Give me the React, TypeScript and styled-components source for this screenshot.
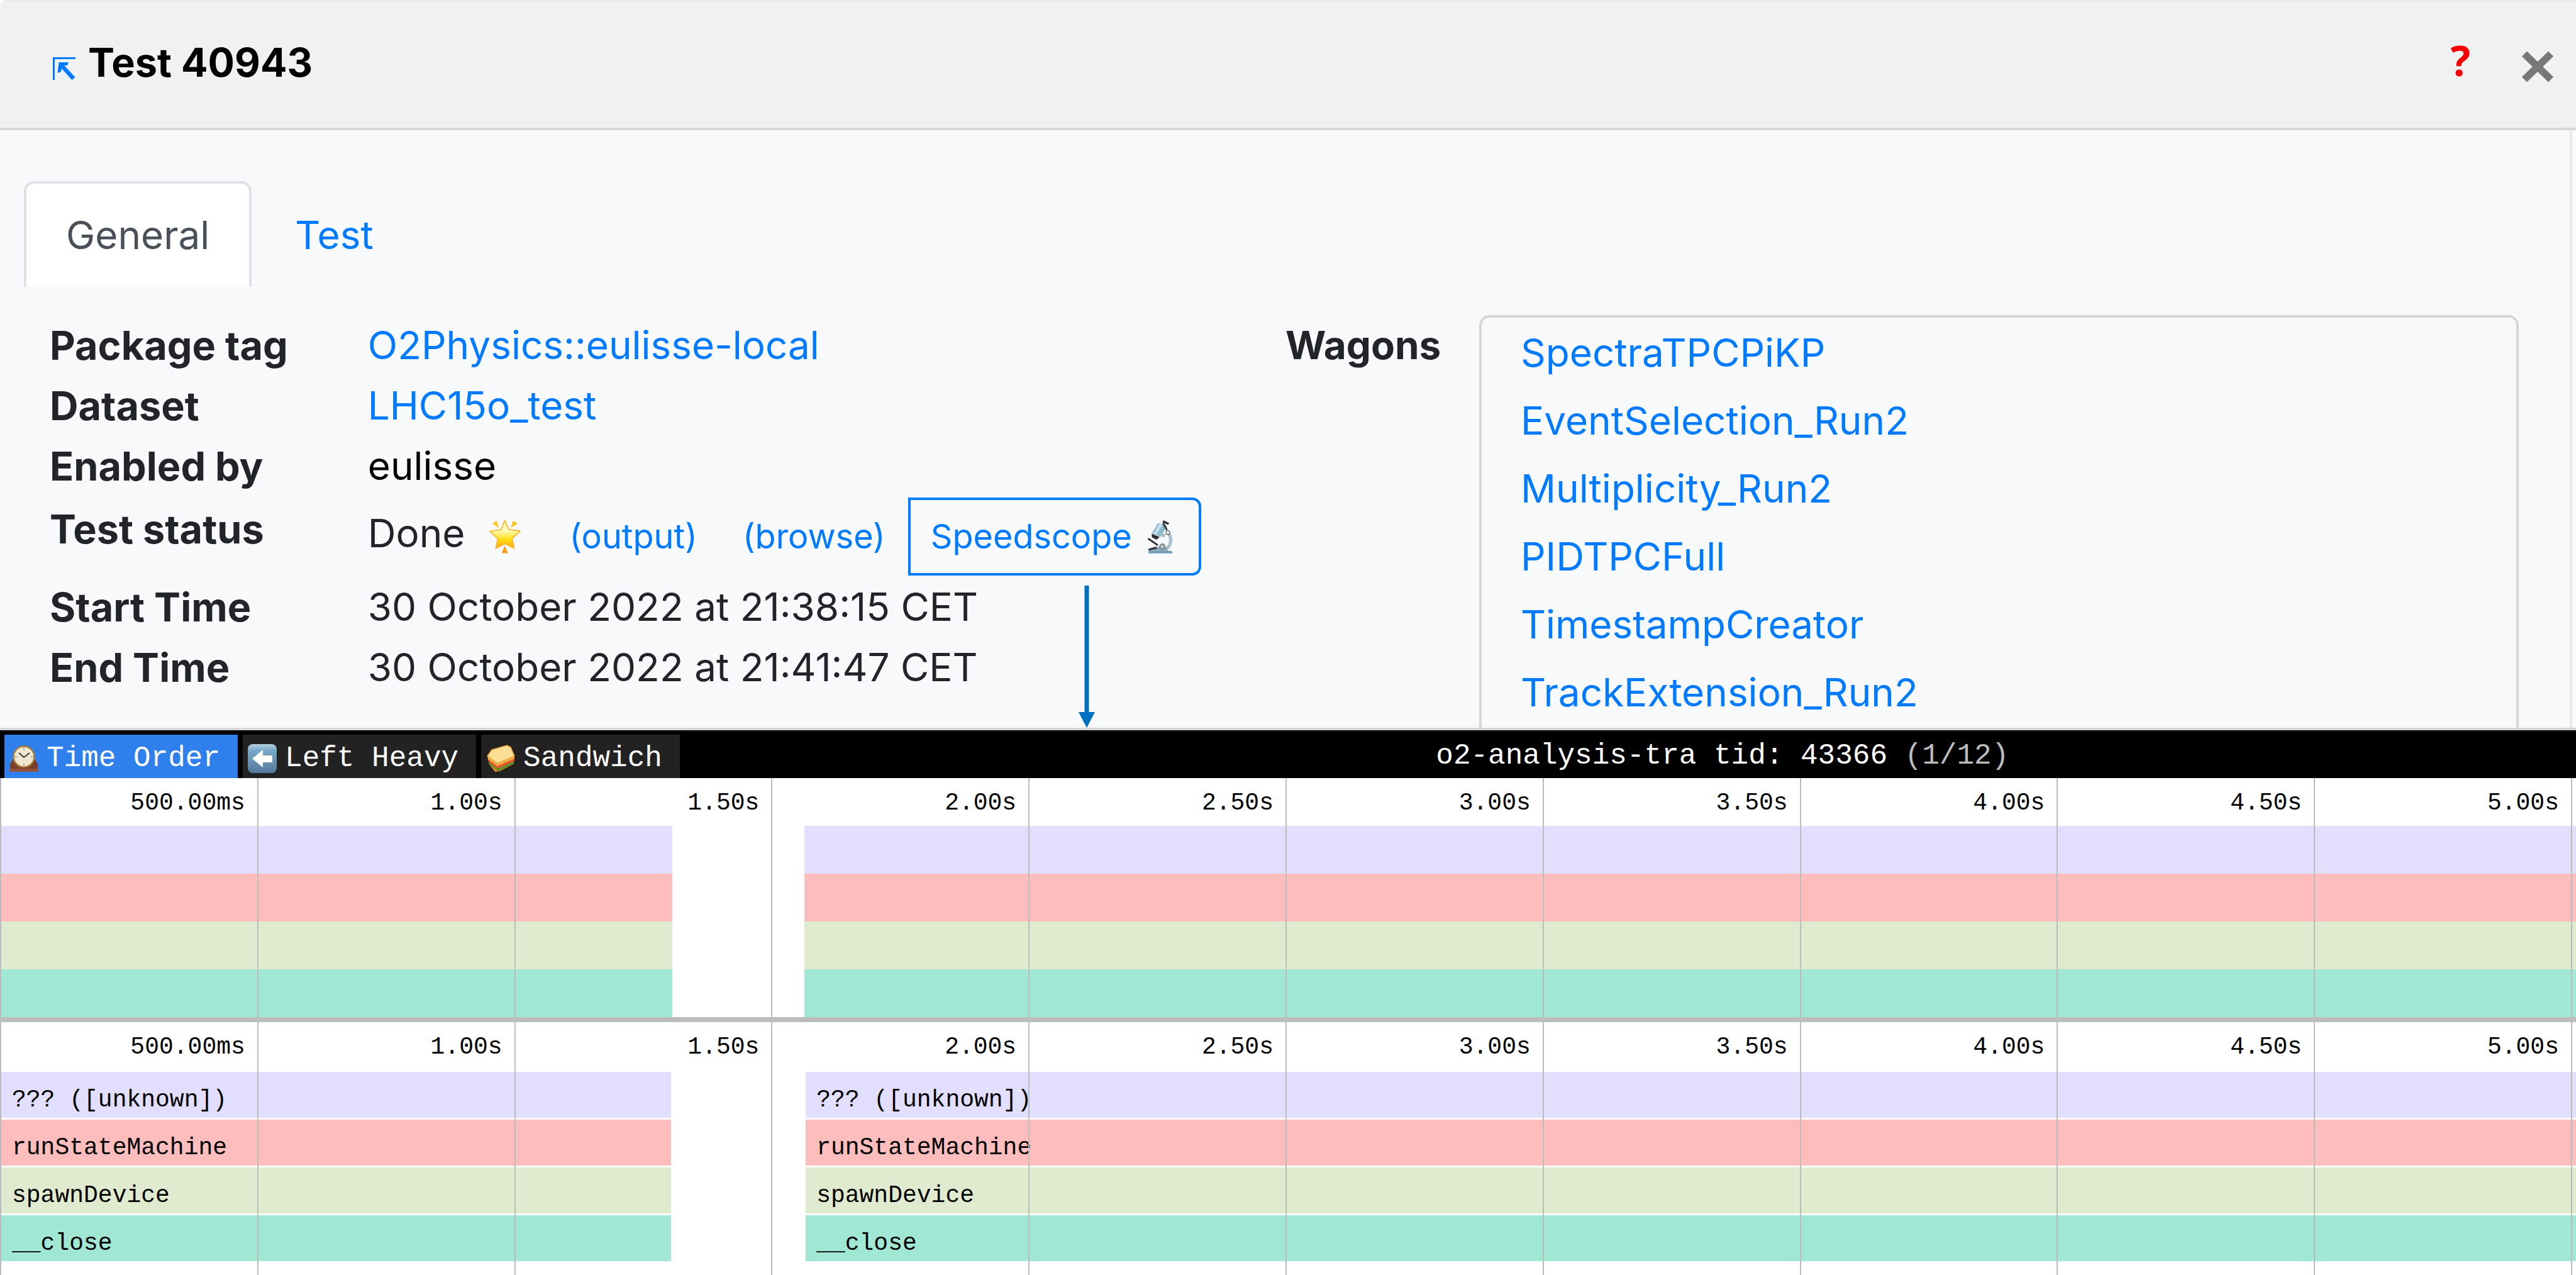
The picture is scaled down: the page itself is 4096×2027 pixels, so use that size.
import React from "react";
import styled, { createGlobalStyle } from "styled-components";

const sans = `Inter, "Liberation Sans", sans-serif`;
const mono = `"Liberation Mono", "DejaVu Sans Mono", monospace`;

const colors = {
  link: "#007bff",
  text: "#212529",
  border: "#d5d7d9",
  grid: "#bcbcbc",
};

const GlobalStyle = createGlobalStyle`
  *, *::before, *::after { box-sizing: border-box; }
  body { margin: 0; background: #fff; font-family: ${sans}; color: ${colors.text}; }
`;

const Page = styled.div`
  display: flex;
  flex-direction: column;
  min-height: 100vh;
  overflow: hidden;
`;

/* ---------- dialog header ---------- */

const Header = styled.header`
  display: flex;
  justify-content: space-between;
  align-items: flex-start;
  padding: 48px 36px 42px 84px;
  background: #f0f1f3;
  border-top: 3px solid #e9eaec;
  border-bottom: 4px solid ${colors.border};
  border-top-left-radius: 12px;
`;

const TitleGroup = styled.div`
  display: flex;
  align-items: center;
  gap: 20px;
`;

const Title = styled.h1`
  margin: 0;
  font-size: 63px;
  line-height: 96px;
  font-weight: 700;
  color: #000;
`;

const IconLink = styled.a`
  display: flex;
  color: ${colors.link};
`;

const HeaderActions = styled.div`
  display: flex;
  align-items: flex-start;
  gap: 82px;
`;

const HelpLink = styled.a`
  font-family: "Noto Sans", "Open Sans", sans-serif;
  font-size: 66px;
  line-height: 88px;
  font-weight: 700;
  color: #f80000;
  text-decoration: none;
`;

const CloseButton = styled.button`
  display: flex;
  align-items: center;
  height: 110px;
  padding: 0;
  border: 0;
  background: none;
  color: #777978;
`;

/* ---------- dialog body ---------- */

const Body = styled.main`
  background: #fbfbfc;
  border-bottom: 4px solid ${colors.border};
`;

const Panel = styled.div`
  margin-right: 6px;
  padding: 81px 81px 0 38px;
  background: #f8f9fb;
  border-right: 4px solid #e7e8ea;
`;

const Tabs = styled.nav`
  display: flex;
  gap: 2px;
`;

const Tab = styled.button<{ $active?: boolean }>`
  padding: 34px 63px;
  border: 4px solid ${p => (p.$active ? "#dee2e6" : "transparent")};
  border-bottom: 0;
  border-radius: 16px 16px 0 0;
  background: ${p => (p.$active ? "#fff" : "transparent")};
  color: ${p => (p.$active ? "#495057" : colors.link)};
  font-family: inherit;
  font-size: 62px;
  line-height: 96px;
`;

const Details = styled.div`
  display: grid;
  grid-template-columns: 1965fr 308fr 1653fr;
  padding: 45px 0 0 41px;
`;

const Facts = styled.dl`
  display: grid;
  grid-template-columns: 506fr 1460fr;
  align-content: start;
  margin: 0;
`;

const Label = styled.dt<{ $tall?: boolean }>`
  font-size: 63px;
  line-height: ${p => (p.$tall ? 104 : 96)}px;
  font-weight: 700;
  white-space: nowrap;
`;

const Value = styled.dd<{ $dark?: boolean }>`
  margin: 0;
  font-size: 62px;
  line-height: 96px;
  white-space: nowrap;
  color: ${p => (p.$dark ? "#000" : "inherit")};
`;

const TextLink = styled.a`
  color: ${colors.link};
  text-decoration: none;
`;

const StarSlot = styled.span`
  display: inline-flex;
  vertical-align: middle;
  margin: 0 38px 0 36px;
`;

const ButtonGroup = styled.span`
  display: inline-flex;
  vertical-align: middle;
  margin: 2px 0;
`;

const SmallButton = styled.a<{ $outlined?: boolean }>`
  position: relative;
  display: flex;
  align-items: center;
  gap: 16px;
  padding: 16px 32px;
  border: 4px solid ${p => (p.$outlined ? colors.link : "transparent")};
  border-radius: 0 14px 14px 0;
  color: ${colors.link};
  font-size: 54px;
  line-height: 84px;
  text-decoration: none;
`;

const Pointer = styled.svg`
  position: absolute;
  top: 136px;
  left: 266px;
  width: 28px;
  height: 226px;
`;

const WagonsHeading = styled.h2`
  margin: 0;
  font-size: 62px;
  line-height: 96px;
  font-weight: 700;
`;

const WagonList = styled.ul`
  display: flex;
  flex-direction: column;
  gap: 12px;
  margin: 0;
  padding: 8px 62px;
  list-style: none;
  font-size: 62px;
  line-height: 96px;
  border: 4px solid ${colors.border};
  border-bottom: 0;
  border-radius: 16px 16px 0 0;
`;

/* ---------- profiler ---------- */

const Toolbar = styled.div`
  display: flex;
  align-items: flex-end;
  padding-left: 7px;
  background: #000;
  color: #fff;
  font-family: ${mono};
  font-size: 46px;
  white-space: nowrap;
`;

const ViewTabs = styled.div`
  display: flex;
  gap: 8px;
`;

const ViewTab = styled.button<{ $active?: boolean }>`
  display: flex;
  align-items: center;
  gap: 13px;
  padding: 7px 28px 0 8px;
  border: 0;
  background: ${p => (p.$active ? "#2f80ed" : "#222")};
  color: #fff;
  font: inherit;
  line-height: 62px;
`;

const Spacer = styled.div<{ $grow: number }>`
  flex: ${p => p.$grow} 0 0;
`;

const ProfileTitle = styled.div`
  padding-top: 6px;
  line-height: 70px;
`;

const Dim = styled.span`
  color: #bdbdbd;
`;

const Chart = styled.section<{ $fill?: boolean; $divider?: boolean }>`
  display: grid;
  grid-template-columns: minmax(0, 1fr);
  flex: ${p => (p.$fill ? "1 0 auto" : "none")};
  border-bottom: ${p => (p.$divider ? `8px solid ${colors.grid}` : "0")};
  font-family: ${mono};
  font-size: 38px;
  color: #000;
`;

const TimeGrid = styled.div`
  grid-area: 1 / 1;
  z-index: 1;
  display: grid;
  grid-template-columns: repeat(10, 1fr) 8px;
`;

const TimeCell = styled.div`
  padding: 3px 19px 0 0;
  border-left: 2px solid ${colors.grid};
  text-align: right;
  line-height: 73px;
`;

const TimeEdge = styled.div`
  border-left: 2px solid ${colors.grid};
`;

const Frames = styled.div<{ $flush?: boolean }>`
  grid-area: 1 / 1;
  display: flex;
  flex-direction: column;
  padding-top: 76px;
  padding-bottom: ${p => (p.$flush ? 0 : 22)}px;
`;

const FrameRow = styled.div`
  display: grid;
  grid-template-columns: 26.1% 5.13% minmax(0, 1fr);
  height: 76px;
`;

const Frame = styled.div<{ $color: string; $second?: boolean; $labelled?: boolean }>`
  grid-column: ${p => (p.$second ? 3 : 1)};
  margin: ${p => (p.$labelled ? (p.$second ? "3px 0 0 2px" : "3px 2px 0 2px") : "0")};
  padding: 17px 0 0 17px;
  background: ${p => p.$color};
  line-height: 56px;
  white-space: nowrap;
  overflow: hidden;
`;

/* ---------- icons ---------- */

const CornerArrowIcon = () => (
  <svg width="36" height="56" viewBox="0 0 36 56" fill="none" stroke="currentColor">
    <path d="M1.5 56V21.500H36" strokeWidth="3" />
    <path d="M12 31L33 54" strokeWidth="6.500" />
    <path d="M7.500 45L9.500 28H25L23 33L15 33L13 43Z" fill="currentColor" stroke="none" />
  </svg>
);

const CloseIcon = () => (
  <svg width="50" height="50" viewBox="0 0 50 50" stroke="currentColor" strokeWidth="11.500">
    <path d="M4 4.500L46 45.500M46 4.500L4 45.500" />
  </svg>
);

const StarIcon = () => (
  <svg width="56" height="56" viewBox="36 44 180 180">
    <defs>
      <linearGradient id="star" x1="0" y1="0" x2="0" y2="1">
        <stop offset="0" stopColor="#fff3a0" />
        <stop offset="0.350" stopColor="#fffbc4" />
        <stop offset="0.680" stopColor="#fee011" />
        <stop offset="1" stopColor="#fba51a" />
      </linearGradient>
    </defs>
    <path
      d="M125 52L145 98L203 106L162 145L173 194L125 171L79 194L89 145L49 107L106 98Z"
      fill="url(#star)" stroke="#fbb92b" strokeWidth="6" strokeLinejoin="round"
    />
    <path d="M64 68L82 56L92 86Z M188 68L168 56L159 86Z" fill="#fbc821" stroke="#fbc821" strokeWidth="4" strokeLinejoin="round" />
    <path d="M125 186L138 217H112Z" fill="#f99b16" stroke="#f99b16" strokeWidth="4" strokeLinejoin="round" />
  </svg>
);

const MicroscopeIcon = () => (
  <svg width="58" height="58" viewBox="33 42 187 187">
    <path d="M160 112C188 134 188 178 152 204" fill="none" stroke="#a9c3cf" strokeWidth="17" />
    <path d="M64 222L68 209H184L190 222Z" fill="#6f9db2" />
    <path d="M82 209L124 184L158 190L166 209Z" fill="#86a9b9" />
    <path d="M64 146L114 180" stroke="#2b2d31" strokeWidth="9" />
    <path d="M66 204L108 192" stroke="#34373b" strokeWidth="12" />
    <path d="M114 66L162 82L128 138L84 118Z" fill="#8fbccd" />
    <path d="M122 70L138 75L106 126L92 120Z" fill="#c3dfe9" />
    <path d="M82 120L122 138L108 152L84 140Z" fill="#2a2b2f" />
    <path d="M140 66L152 86L160 102" stroke="#2a2b2f" strokeWidth="9" fill="none" />
    <path d="M142 52L172 66L166 76L138 62Z" fill="#2f3237" />
    <circle cx="165" cy="115" r="10" fill="#f2f5f7" stroke="#5c6166" strokeWidth="4" />
    <circle cx="143" cy="130" r="6" fill="#d9dfe2" stroke="#5c6166" strokeWidth="3" />
    <circle cx="137" cy="187" r="14" fill="#9ba6ac" stroke="#6b7880" strokeWidth="4" />
    <circle cx="137" cy="187" r="5" fill="#d5dadd" />
  </svg>
);

const ClockIcon = () => (
  <svg width="46" height="44" viewBox="0 0 46 44">
    <path d="M8 20C8 8 14 1 23 1S38 8 38 20L45 30V39H1V30Z" fill="#7a3f2a" />
    <rect x="0" y="38" width="46" height="5" fill="#93523b" />
    <circle cx="23" cy="19" r="16.500" fill="#efe7d0" stroke="#a87b3c" strokeWidth="2.500" />
    <path d="M15 13L23 20L32 13" fill="none" stroke="#3a3a3a" strokeWidth="2" />
    <path d="M23 5V8M23 30V33M9 19H12M34 19H37" stroke="#8f8a7c" strokeWidth="1.500" />
  </svg>
);

const LeftArrowIcon = () => (
  <svg width="46" height="46" viewBox="0 0 46 46">
    <defs>
      <linearGradient id="key" x1="0" y1="0" x2="0" y2="1">
        <stop offset="0" stopColor="#b4d3e4" />
        <stop offset="0.220" stopColor="#78a9c8" />
        <stop offset="1" stopColor="#55799a" />
      </linearGradient>
    </defs>
    <rect width="46" height="46" rx="8" fill="url(#key)" />
    <path d="M7 23L24 9V18H39V29H24V37Z" fill="#fff" />
  </svg>
);

const SandwichIcon = () => (
  <svg width="46" height="44" viewBox="0 0 46 44">
    <path d="M2 18L17 32L18 43L14 43L5 31Z" fill="#d98a2a" />
    <path d="M17 31L44 21L43 31L20 43Z" fill="#c8791f" />
    <path d="M4 26L17 37L44 25V30L19 42L5 31Z" fill="#5f8f2a" />
    <path d="M3 22L17 33L45 22V26L18 38L4 27Z" fill="#e5532d" />
    <path d="M2 18L17 30L45 18V22L18 34L3 23Z" fill="#f4b13d" />
    <path d="M9 8L33 1L39 4L45 18L18 30L2 18Z" fill="#fbdf95" stroke="#e2a23f" strokeWidth="1.500" strokeLinejoin="round" />
  </svg>
);

/* ---------- data ---------- */

const wagons = [
  "SpectraTPCPiKP",
  "EventSelection_Run2",
  "Multiplicity_Run2",
  "PIDTPCFull",
  "TimestampCreator",
  "TrackExtension_Run2",
];

const ticks = ["500.00ms", "1.00s", "1.50s", "2.00s", "2.50s", "3.00s", "3.50s", "4.00s", "4.50s", "5.00s"];

const frames = [
  { name: "??? ([unknown])", color: "#e1defe" },
  { name: "runStateMachine", color: "#febdbd" },
  { name: "spawnDevice", color: "#e0eace" },
  { name: "__close", color: "#a1e8d4" },
];

const views = [
  { name: "Time Order", icon: <ClockIcon />, active: true },
  { name: "Left Heavy", icon: <LeftArrowIcon />, active: false },
  { name: "Sandwich", icon: <SandwichIcon />, active: false },
];

function Timeline({ labelled }: { labelled?: boolean }) {
  return (
    <Chart $fill={labelled} $divider={!labelled}>
      <TimeGrid>
        {ticks.map(t => <TimeCell key={t}>{t}</TimeCell>)}
        <TimeEdge />
      </TimeGrid>
      <Frames $flush={!labelled}>
        {frames.map(f => (
          <FrameRow key={f.name}>
            <Frame $color={f.color} $labelled={labelled}>{labelled && f.name}</Frame>
            <Frame $color={f.color} $labelled={labelled} $second>{labelled && f.name}</Frame>
          </FrameRow>
        ))}
      </Frames>
    </Chart>
  );
}

export default function App() {
  return (
    <Page>
      <GlobalStyle />
      <Header>
        <TitleGroup>
          <IconLink href="#test" aria-label="Open test"><CornerArrowIcon /></IconLink>
          <Title>Test 40943</Title>
        </TitleGroup>
        <HeaderActions>
          <HelpLink href="#help">?</HelpLink>
          <CloseButton aria-label="Close"><CloseIcon /></CloseButton>
        </HeaderActions>
      </Header>

      <Body>
        <Panel>
          <Tabs>
            <Tab $active>General</Tab>
            <Tab>Test</Tab>
          </Tabs>
          <Details>
            <Facts>
              <Label>Package tag</Label>
              <Value><TextLink href="#package">O2Physics::eulisse-local</TextLink></Value>
              <Label>Dataset</Label>
              <Value><TextLink href="#dataset">LHC15o_test</TextLink></Value>
              <Label>Enabled by</Label>
              <Value $dark>eulisse</Value>
              <Label $tall>Test status</Label>
              <Value>
                Done
                <StarSlot><StarIcon /></StarSlot>
                <ButtonGroup>
                  <SmallButton href="#output">(output)</SmallButton>
                  <SmallButton href="#browse">(browse)</SmallButton>
                  <SmallButton href="#speedscope" $outlined>
                    Speedscope
                    <MicroscopeIcon />
                    <Pointer viewBox="0 0 28 226" aria-hidden="true">
                      <path d="M14 0V204" stroke="#0070c0" strokeWidth="7" />
                      <path d="M1 201H27L14 226Z" fill="#0070c0" />
                    </Pointer>
                  </SmallButton>
                </ButtonGroup>
              </Value>
              <Label>Start Time</Label>
              <Value>30 October 2022 at 21:38:15 CET</Value>
              <Label>End Time</Label>
              <Value>30 October 2022 at 21:41:47 CET</Value>
            </Facts>
            <WagonsHeading>Wagons</WagonsHeading>
            <WagonList>
              {wagons.map(w => (
                <li key={w}><TextLink href={`#${w}`}>{w}</TextLink></li>
              ))}
            </WagonList>
          </Details>
        </Panel>
      </Body>

      <Toolbar>
        <ViewTabs>
          {views.map(v => (
            <ViewTab key={v.name} $active={v.active}>{v.icon}{v.name}</ViewTab>
          ))}
        </ViewTabs>
        <Spacer $grow={4} />
        <ProfileTitle>o2-analysis-tra tid: 43366 <Dim>(1/12)</Dim></ProfileTitle>
        <Spacer $grow={3} />
      </Toolbar>

      <Timeline />
      <Timeline labelled />
    </Page>
  );
}
